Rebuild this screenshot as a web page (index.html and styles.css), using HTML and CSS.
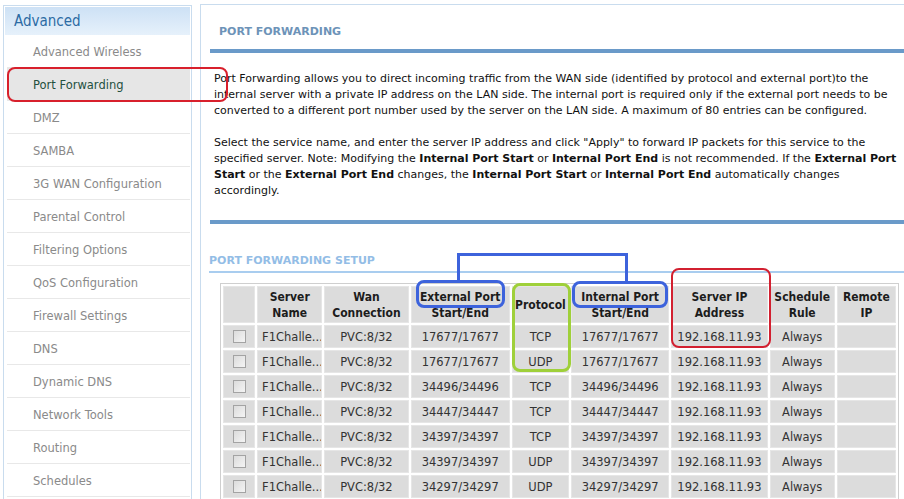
FILE: index.html
```html
<!DOCTYPE html>
<html lang="en">

<head>
  <meta charset="UTF-8">
  <title>Port Forwarding</title>
  <link rel="stylesheet" href="styles.css">
</head>

<body>
  <div class="page">
    <!-- Left menu -->
    <div class="sidebar">
      <div class="side-head">Advanced</div>
      <div class="side-item">Advanced Wireless</div>
      <div class="side-item active">Port Forwarding</div>
      <div class="side-item">DMZ</div>
      <div class="side-item">SAMBA</div>
      <div class="side-item">3G WAN Configuration</div>
      <div class="side-item">Parental Control</div>
      <div class="side-item">Filtering Options</div>
      <div class="side-item">QoS Configuration</div>
      <div class="side-item">Firewall Settings</div>
      <div class="side-item">DNS</div>
      <div class="side-item">Dynamic DNS</div>
      <div class="side-item">Network Tools</div>
      <div class="side-item">Routing</div>
      <div class="side-item">Schedules</div>
    </div>

    <!-- Main content -->
    <div class="main">
      <div class="title-bar">PORT FORWARDING</div>
      <p class="intro">Port Forwarding allows you to direct incoming traffic from the WAN side (identified by protocol and external port)to the<br>internal server with a private IP address on the LAN side. The internal port is required only if the external port needs to be<br>converted to a different port number used by the server on the LAN side. A maximum of 80 entries can be configured.</p>
      <p class="intro second">Select the service name, and enter the server IP address and click "Apply" to forward IP packets for this service to the<br>specified server. Note: Modifying the <b>Internal Port Start</b> or <b>Internal Port End</b> is not recommended. If the <b>External Port</b><br><b>Start</b> or the <b>External Port End</b> changes, the <b>Internal Port Start</b> or <b>Internal Port End</b> automatically changes<br>accordingly.</p>
      <div class="divider"></div>

      <div class="sub-title">PORT FORWARDING SETUP</div>

      <table class="rules">
        <colgroup>
          <col class="c-cb"><col class="c-name"><col class="c-wan"><col class="c-ext"><col class="c-proto"><col class="c-int"><col class="c-ip"><col class="c-sched"><col class="c-remote">
        </colgroup>
        <tr>
          <th></th>
          <th>Server<br>Name</th>
          <th>Wan<br>Connection</th>
          <th>External Port<br>Start/End</th>
          <th>Protocol</th>
          <th>Internal Port<br>Start/End</th>
          <th>Server IP<br>Address</th>
          <th>Schedule<br>Rule</th>
          <th>Remote<br>IP</th>
        </tr>
        <tr>
          <td><span class="cb"></span></td><td class="name">F1Challe...</td><td>PVC:8/32</td><td>17677/17677</td><td>TCP</td><td>17677/17677</td><td>192.168.11.93</td><td>Always</td><td></td>
        </tr>
        <tr>
          <td><span class="cb"></span></td><td class="name">F1Challe...</td><td>PVC:8/32</td><td>17677/17677</td><td>UDP</td><td>17677/17677</td><td>192.168.11.93</td><td>Always</td><td></td>
        </tr>
        <tr>
          <td><span class="cb"></span></td><td class="name">F1Challe...</td><td>PVC:8/32</td><td>34496/34496</td><td>TCP</td><td>34496/34496</td><td>192.168.11.93</td><td>Always</td><td></td>
        </tr>
        <tr>
          <td><span class="cb"></span></td><td class="name">F1Challe...</td><td>PVC:8/32</td><td>34447/34447</td><td>TCP</td><td>34447/34447</td><td>192.168.11.93</td><td>Always</td><td></td>
        </tr>
        <tr>
          <td><span class="cb"></span></td><td class="name">F1Challe...</td><td>PVC:8/32</td><td>34397/34397</td><td>TCP</td><td>34397/34397</td><td>192.168.11.93</td><td>Always</td><td></td>
        </tr>
        <tr>
          <td><span class="cb"></span></td><td class="name">F1Challe...</td><td>PVC:8/32</td><td>34397/34397</td><td>UDP</td><td>34397/34397</td><td>192.168.11.93</td><td>Always</td><td></td>
        </tr>
        <tr>
          <td><span class="cb"></span></td><td class="name">F1Challe...</td><td>PVC:8/32</td><td>34297/34297</td><td>UDP</td><td>34297/34297</td><td>192.168.11.93</td><td>Always</td><td></td>
        </tr>
      </table>
    </div>

    <!-- hand-drawn highlights -->
    <div class="mark mark-pf"></div>
    <div class="mark mark-ext"></div>
    <div class="mark mark-int"></div>
    <div class="mark-link"></div>
    <div class="mark mark-proto"></div>
    <div class="mark mark-ip"></div>
  </div>
</body>

</html>
```

FILE: styles.css
```css
* {
  margin: 0;
  padding: 0;
  box-sizing: border-box;
}

body {
  background-color: #fff;
  font-family: "DejaVu Sans", sans-serif;
  overflow: hidden;
  height: 499px;
}

.page {
  position: relative;
  display: flex;
  align-items: flex-start;
  height: 499px;
  overflow: hidden;
  padding-top: 4px;
}

/* sidebar */
.sidebar {
  flex-shrink: 0;
  margin: 1px 0 0 3px;
  width: 189px;
  height: 520px;
  padding: 1px 1px 0 1px;
  border: 1px solid #c9dcee;
}

.side-head {
  height: 28px;
  line-height: 28px;
  padding-left: 9px;
  font-family: "DejaVu Sans Condensed", "DejaVu Sans", sans-serif;
  font-stretch: condensed;
  font-size: 15px;
  color: #2c6ba4;
  background: linear-gradient(#cde1f5, #e6f1fb);
}

.side-item {
  margin-left: 2px;
  height: 33px;
  line-height: 34px;
  padding-left: 26px;
  border-bottom: 1px solid #e8e8e8;
  font-size: 11.5px;
  color: #8a8a8a;
}

.side-item.active {
  background-color: #e6e6e6;
  color: #24503f;
}

/* main panel */
.main {
  flex-shrink: 0;
  margin-left: 8px;
  width: 720px;
  height: 520px;
  border: 1px solid #c9dcee;
  border-right: none;
}

.title-bar {
  margin-left: 9px;
  height: 48px;
  padding: 20px 0 0 9px;
  line-height: 14px;
  border-bottom: 4px solid #6a9ac9;
  font-size: 11px;
  font-weight: bold;
  color: #6d93b8;
}

.intro {
  margin: 18px 0 0 13px;
  font-size: 11px;
  line-height: 16px;
  color: #111;
  white-space: nowrap;
}

.intro.second {
  margin-top: 16px;
}

.divider {
  margin: 21px 0 0 9px;
  height: 4px;
  background-color: #6a9ac9;
}

.sub-title {
  margin: 31px 0 0 8px;
  height: 18px;
  line-height: 12px;
  border-bottom: 2px solid #a9cdef;
  font-size: 11px;
  font-weight: bold;
  color: #93bde6;
}

/* rules table */
.rules {
  margin: 10px 0 0 19px;
  width: 679px;
  table-layout: fixed;
  border-collapse: separate;
  border-spacing: 2px;
  border: 1px solid #cfcfcf;
  font-size: 11.5px;
  color: #333;
}

.c-cb { width: 32px; }
.c-name { width: 65px; }
.c-wan { width: 84px; }
.c-ext { width: 99px; }
.c-proto { width: 57px; }
.c-int { width: 98px; }
.c-ip { width: 96px; }
.c-sched { width: 65px; }
.c-remote { width: 59px; }

.rules th,
.rules td {
  background-color: #dcdcdc;
  border: 1px solid #e6e6e6;
  text-align: center;
  vertical-align: middle;
  white-space: nowrap;
  overflow: hidden;
}

.rules th {
  height: 37px;
  line-height: 16px;
  font-family: "DejaVu Sans Condensed", "DejaVu Sans", sans-serif;
  font-stretch: condensed;
  font-size: 12px;
  font-weight: bold;
  color: #1c1c1c;
}

.rules td {
  height: 23px;
}

.rules td.name {
  text-align: left;
  padding-left: 4px;
}

.cb {
  display: inline-block;
  width: 13px;
  height: 13px;
  margin-top: 3px;
  border: 1px solid #a3a3a3;
  background: linear-gradient(135deg, #dcdcdc, #f4f4f4);
}

/* annotation overlays */
.mark {
  position: absolute;
  border-radius: 8px;
}

.mark-pf {
  left: 7px;
  top: 67px;
  width: 221px;
  height: 35px;
  border: 2px solid #d8202c;
}

.mark-ext {
  left: 416px;
  top: 280px;
  width: 89px;
  height: 28px;
  border: 3px solid #3d63dc;
}

.mark-int {
  left: 572px;
  top: 281px;
  width: 96px;
  height: 27px;
  border: 3px solid #3d63dc;
}

.mark-link {
  position: absolute;
  left: 457px;
  top: 253px;
  width: 171px;
  height: 28px;
  border: 3px solid #3d63dc;
  border-bottom: none;
}

.mark-proto {
  left: 512px;
  top: 283px;
  width: 59px;
  height: 89px;
  border: 3px solid #9fd03a;
}

.mark-ip {
  left: 671px;
  top: 268px;
  width: 100px;
  height: 80px;
  border: 2px solid #d22030;
}
```
